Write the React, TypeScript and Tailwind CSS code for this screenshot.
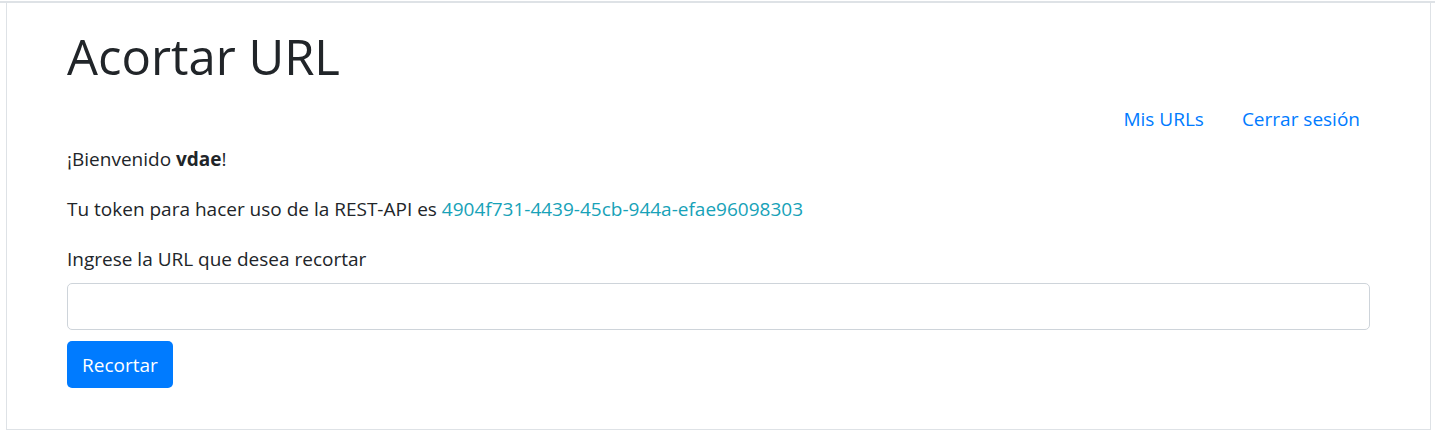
export default function App() {
  return (
    <div className="h-[434px] bg-white pt-px" style={{ fontFamily: '"Segoe UI", "Open Sans", sans-serif' }}>
      <div className="border-t-2 border-[#dee2e6]">
        <div className="ml-[6px] w-[1425px] h-[427px] border-x border-b border-[#dee2e6] px-[60px] pt-[23px] text-[#212529]">
          <h1 className="text-[49px] leading-[60px] font-medium">Acortar URL</h1>

          <nav className="mt-[18px] flex justify-end gap-[38px] pr-[10px] text-[19px] leading-[30px]">
            <a href="#" className="text-[#007bff]">Mis URLs</a>
            <a href="#" className="text-[#007bff]">Cerrar sesión</a>
          </nav>

          <div className="mt-[10px] text-[19px] leading-[30px]">
            <p className="mb-[20px]">
              ¡Bienvenido <b className="font-bold">vdae</b>!
            </p>
            <p className="mb-[20px]">
              Tu token para hacer uso de la REST-API es{" "}
              <span className="text-[#17a2b8]">4904f731-4439-45cb-944a-efae96098303</span>
            </p>
            <label className="block mb-[9px]">Ingrese la URL que desea recortar</label>
            <input
              type="text"
              className="block w-full h-[47px] border border-[#ced4da] rounded-[5px] px-[15px] outline-none"
            />
            <button className="mt-[11px] h-[47px] w-[106px] rounded-[5px] bg-[#007bff] text-white text-[19px]">
              Recortar
            </button>
          </div>
        </div>
      </div>
    </div>
  )
}
